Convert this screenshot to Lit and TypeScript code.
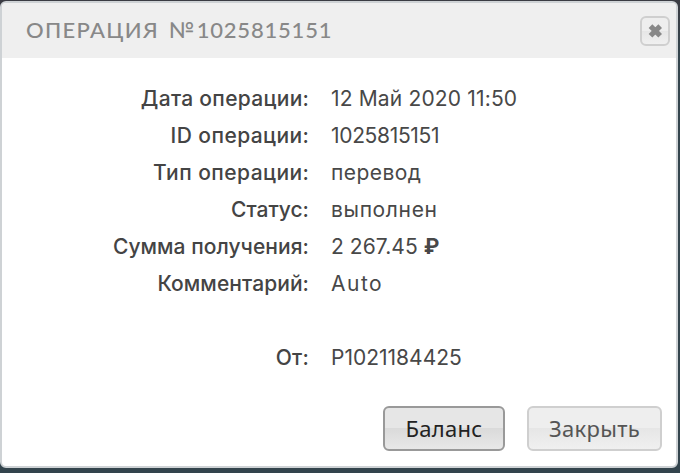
/**
 * Operation Details Dialog
 *
 * Shows a single payment operation with its properties and actions
 */

import { LitElement, html, css, svg } from 'lit';
import { customElement, property } from 'lit/decorators.js';
import { classMap } from 'lit/directives/class-map.js';

/**
 * Operation property row
 */
interface OperationField {
  label: string;
  value: string;
  labelTracking?: number;
  tracking?: number;
  rouble?: boolean;
  separated?: boolean;
}

const FIELDS: OperationField[] = [
  { label: 'Дата операции:', value: '12 Май 2020 11:50', labelTracking: 0.3, tracking: 0.16 },
  { label: 'ID операции:', value: '1025815151', labelTracking: 0.43, tracking: -0.33 },
  { label: 'Тип операции:', value: 'перевод', labelTracking: 0.45, tracking: 0.45 },
  { label: 'Статус:', value: 'выполнен', tracking: 0.65 },
  { label: 'Сумма получения:', value: '2 267.45', labelTracking: 0.06, tracking: 0.08, rouble: true },
  { label: 'Комментарий:', value: 'Auto', labelTracking: 0.08, tracking: 1.5 },
  { label: 'От:', value: 'P1021184425', labelTracking: 0.4, separated: true },
];

const closeIcon = svg`
  <path d="M4 3.6 L12.6 12.2 M12.6 3.6 L4 12.2" fill="none" stroke="currentColor" stroke-width="4.6" />
`;

@customElement('operation-field')
export class OperationFieldRow extends LitElement {
  @property({ attribute: false })
  field!: OperationField;

  static override styles = css`
    :host {
      display: grid;
      grid-template-columns: 307px 1fr;
      column-gap: 22px;
      height: 37px;
      line-height: 37px;
      white-space: nowrap;
    }

    .label {
      justify-self: end;
      color: #444;
      font-weight: 500;
    }

    .value {
      color: #484848;
    }

    .rouble {
      font-weight: 700;
    }
  `;

  override render() {
    const { label, value, labelTracking = 0, tracking = 0, rouble } = this.field;

    return html`
      <span class="label" style="letter-spacing: ${labelTracking}px; margin-right: ${-labelTracking}px"
        >${label}</span
      >
      <span class="value"
        ><span style="letter-spacing: ${tracking}px">${value}</span>${rouble
          ? html` <span class="rouble">₽</span>`
          : ''}</span
      >
    `;
  }
}

@customElement('app-root')
export class AppRoot extends LitElement {
  @property({ type: String })
  operationId = '1025815151';

  static override styles = css`
    :host {
      display: block;
      box-sizing: border-box;
      height: 473px;
      padding: 1px 2px 5px 0;
      background: linear-gradient(#3b3c43, #33444d 12%, #33444d);
      font-family: Inter, 'Open Sans', sans-serif;
      font-size: 21px;
    }

    .dialog {
      display: flex;
      flex-direction: column;
      box-sizing: border-box;
      height: 467px;
      overflow: hidden;
      border: 2px solid #ced2d5;
      border-radius: 6px;
      background: #fff;
    }

    header {
      display: flex;
      align-items: center;
      justify-content: space-between;
      box-sizing: border-box;
      height: 55px;
      padding: 0 6px 0 24px;
      background: #efefef;
    }

    h1 {
      margin: -2px 0 0;
      color: #888;
      font: 500 22px/30px Lato, sans-serif;
      letter-spacing: 1.3px;
      white-space: nowrap;
    }

    .number {
      letter-spacing: 0.8px;
    }

    .sign {
      margin-right: 1px;
      margin-left: 3px;
    }

    button {
      box-sizing: border-box;
      border: 2px solid #cfcfcf;
      border-radius: 6px;
      background: linear-gradient(#eeeeee 50%, #e6e6e6 50%, #f0f0f0);
      color: #555;
    }

    .close {
      display: grid;
      place-items: center;
      width: 30px;
      height: 30px;
      padding: 0;
      color: #888;
    }

    .close svg {
      width: 18px;
      height: 18px;
    }

    .fields {
      flex: 1;
      padding-top: 22px;
    }

    .separated {
      margin-top: 37px;
    }

    footer {
      display: flex;
      justify-content: flex-end;
      gap: 22px;
      padding: 0 14px 15px 0;
    }

    .action {
      width: 135px;
      height: 45px;
      padding: 0;
      font: 22px/41px 'Noto Sans', sans-serif;
      letter-spacing: 0.3px;
    }

    .primary {
      width: 122px;
      border-color: #999;
      background: linear-gradient(#e6e6e6 50%, #dadada 50%, #e8e8e8);
      color: #222;
    }
  `;

  override render() {
    return html`
      <section class="dialog">
        <header>
          <h1>
            ОПЕРАЦИЯ <span class="sign">№</span><span class="number">${this.operationId}</span>
          </h1>
          <button class="close" aria-label="Закрыть">
            <svg viewBox="0 0 16 16">${closeIcon}</svg>
          </button>
        </header>
        <div class="fields">
          ${FIELDS.map(
            (field) => html`
              <operation-field
                class=${classMap({ separated: !!field.separated })}
                .field=${field}
              ></operation-field>
            `
          )}
        </div>
        <footer>
          <button class="action primary">Баланс</button>
          <button class="action">Закрыть</button>
        </footer>
      </section>
    `;
  }
}

declare global {
  interface HTMLElementTagNameMap {
    'operation-field': OperationFieldRow;
    'app-root': AppRoot;
  }
}
